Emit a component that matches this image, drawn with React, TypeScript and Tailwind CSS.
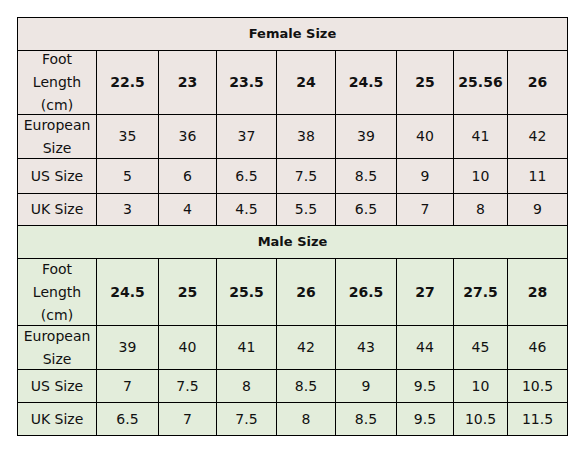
import React from "react";

const cols = ["w-[79px]"];

type Section = {
  title: string;
  bg: string;
  foot: string[];
  eu: string[];
  us: string[];
  uk: string[];
  footH: string;
  euH: string;
  usH: string;
  ukH: string;
};

const sections: Section[] = [
  {
    title: "Female Size",
    bg: "bg-[#ede6e3]",
    foot: ["22.5", "23", "23.5", "24", "24.5", "25", "25.56", "26"],
    eu: ["35", "36", "37", "38", "39", "40", "41", "42"],
    us: ["5", "6", "6.5", "7.5", "8.5", "9", "10", "11"],
    uk: ["3", "4", "4.5", "5.5", "6.5", "7", "8", "9"],
    footH: "h-[64px]",
    euH: "h-[44px]",
    usH: "h-[35px]",
    ukH: "h-[32px]",
  },
  {
    title: "Male Size",
    bg: "bg-[#e3eddb]",
    foot: ["24.5", "25", "25.5", "26", "26.5", "27", "27.5", "28"],
    eu: ["39", "40", "41", "42", "43", "44", "45", "46"],
    us: ["7", "7.5", "8", "8.5", "9", "9.5", "10", "10.5"],
    uk: ["6.5", "7", "7.5", "8", "8.5", "9.5", "10.5", "11.5"],
    footH: "h-[67px]",
    euH: "h-[44px]",
    usH: "h-[33px]",
    ukH: "h-[33px]",
  },
];

const font = { fontFamily: '"Comic Sans MS", "DejaVu Sans", sans-serif' };

function Row({
  label,
  values,
  h,
  bold,
}: {
  label: React.ReactNode;
  values: string[];
  h: string;
  bold?: boolean;
}) {
  return (
    <>
      <div
        className={`${h} flex items-center justify-center border-r border-b border-black text-center text-[14px] leading-[23px]`}
      >
        {label}
      </div>
      {values.map((v, i) => (
        <div
          key={i}
          className={`${h} flex items-center justify-center border-r border-b border-black ${
            bold ? "text-[14px] font-bold" : "text-[14px]"
          }`}
        >
          {v}
        </div>
      ))}
    </>
  );
}

export default function App() {
  void cols;
  return (
    <div className="w-[588px] h-[460px] bg-white pt-[17px] pl-[17px] text-[#111]" style={font}>
      <div className="w-[551px] border-l border-t border-black">
        {sections.map((s) => (
          <div
            key={s.title}
            className={`grid grid-cols-[79px_62px_58px_60px_59px_61px_57px_54px_60px] ${s.bg}`}
          >
            <div className="col-span-9 h-[33px] flex items-center justify-center border-r border-b border-black text-[13px] font-bold">
              {s.title}
            </div>
            <Row
              label={
                <span>
                  Foot
                  <br />
                  Length
                  <br />
                  (cm)
                </span>
              }
              values={s.foot}
              h={s.footH}
              bold
            />
            <Row
              label={
                <span>
                  European
                  <br />
                  Size
                </span>
              }
              values={s.eu}
              h={s.euH}
            />
            <Row label="US Size" values={s.us} h={s.usH} />
            <Row label="UK Size" values={s.uk} h={s.ukH} />
          </div>
        ))}
      </div>
    </div>
  );
}
